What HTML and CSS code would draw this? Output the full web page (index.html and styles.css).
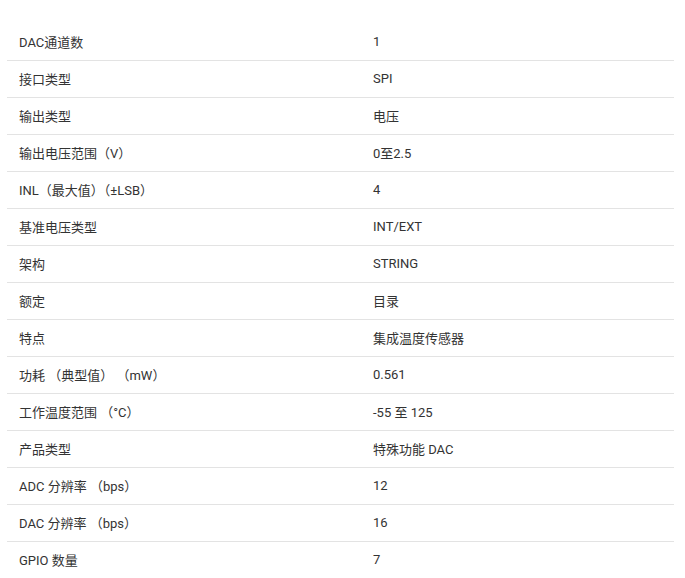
FILE: index.html
```html
<!DOCTYPE html>
<html lang="zh-CN">
<head>
<meta charset="utf-8">
<link rel="stylesheet" href="styles.css">
</head>
<body>
<div class="specs">
  <div class="row"><div class="k">DAC通道数</div><div class="v">1</div></div>
  <div class="row"><div class="k">接口类型</div><div class="v">SPI</div></div>
  <div class="row"><div class="k">输出类型</div><div class="v">电压</div></div>
  <div class="row"><div class="k">输出电压范围（V）</div><div class="v">0至2.5</div></div>
  <div class="row"><div class="k">INL（最大值）（±LSB）</div><div class="v">4</div></div>
  <div class="row"><div class="k">基准电压类型</div><div class="v">INT/EXT</div></div>
  <div class="row"><div class="k">架构</div><div class="v">STRING</div></div>
  <div class="row"><div class="k">额定</div><div class="v">目录</div></div>
  <div class="row"><div class="k">特点</div><div class="v">集成温度传感器</div></div>
  <div class="row"><div class="k">功耗 （典型值） （mW）</div><div class="v">0.561</div></div>
  <div class="row"><div class="k">工作温度范围 （°C）</div><div class="v">-55 至 125</div></div>
  <div class="row"><div class="k">产品类型</div><div class="v">特殊功能 DAC</div></div>
  <div class="row"><div class="k">ADC 分辨率 （bps）</div><div class="v">12</div></div>
  <div class="row"><div class="k">DAC 分辨率 （bps）</div><div class="v">16</div></div>
  <div class="row last"><div class="k">GPIO 数量</div><div class="v">7</div></div>
</div>
</body>
</html>
```
FILE: styles.css
```css
html, body {
  margin: 0;
  padding: 0;
  background: #ffffff;
}
body {
  font-family: Roboto, "Noto Sans CJK SC", sans-serif;
  font-size: 13px;
  color: #333333;
}
.specs {
  width: 667px;
  margin-left: 7px;
  padding-top: 24px;
}
.row {
  display: grid;
  grid-template-columns: 366px 1fr;
  height: 34px;
  padding-bottom: 2px;
  align-items: center;
  border-bottom: 1px solid #e3e3e3;
}
.row.last {
  border-bottom: none;
}
.k {
  padding-left: 12px;
}
.v {
  padding-left: 0;
}
```
